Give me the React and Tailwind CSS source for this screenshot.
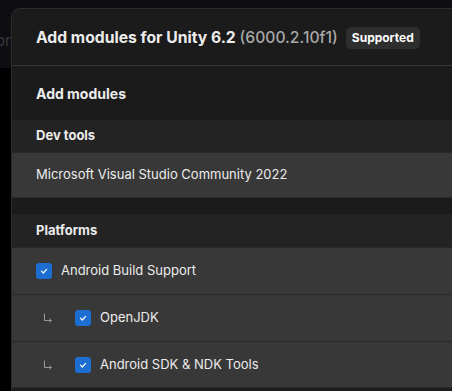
import React from "react";

function Check() {
  return (
    <span className="flex h-4 w-4 shrink-0 items-center justify-center rounded-[3px] bg-[#1c6fd1]">
      <svg width="10" height="10" viewBox="0 0 10 10" fill="none">
        <path d="M2.5 5.2 L4.3 7 L7.6 3.4" stroke="#ffffff" strokeWidth="1.2" strokeLinecap="round" strokeLinejoin="round" />
      </svg>
    </span>
  );
}

function Arrow() {
  return (
    <svg width="12" height="12" viewBox="0 0 12 12" fill="none" className="shrink-0">
      <path d="M2.5 1.5 V8.5 H9.5" stroke="#9a9a9a" strokeWidth="1" />
      <path d="M7.5 6.5 L9.5 8.5 L7.5 10.5" stroke="#9a9a9a" strokeWidth="1" />
    </svg>
  );
}

export default function App() {
  return (
    <div className="relative h-[391px] w-[452px] overflow-hidden bg-black font-['Inter',sans-serif]">
      <div className="flex h-[68px] items-start bg-[#0e0e12] pt-[30px]">
        <span className="-ml-[4px] text-[15px] text-[#3a3a40]">on</span>
      </div>
      <div className="absolute left-[11px] top-[8px] w-[460px] rounded-tl-[9px] border border-[#2c2c2c] bg-[#1b1b1b] text-[#ececec]">
        <div className="flex h-[57px] items-center gap-[8px] border-b border-[#363636] px-6 pt-[2px]">
          <span className="text-[15.7px] font-bold">
            Add modules for Unity 6.2{" "}
            <span className="font-medium text-[#a8a8a8]">(6000.2.10f1)</span>
          </span>
          <span className="rounded-[5px] bg-[#2e2e2e] px-[6px] py-[2px] text-[12px] font-bold text-white">Supported</span>
        </div>
        <div className="flex h-[54px] items-center px-6 text-[14px] font-bold">Add modules</div>
        <div className="flex h-[32px] items-center bg-[#232323] px-6 text-[13px] font-bold">Dev tools</div>
        <div className="flex h-[46px] items-center border-y border-[#2a2a2a] bg-[#383838] px-6 text-[13px]">
          Microsoft Visual Studio Community 2022
        </div>
        <div className="h-[16px]" />
        <div className="flex h-[33px] items-center bg-[#232323] px-6 text-[13px] font-bold">Platforms</div>
        <div className="flex h-[47px] items-center gap-[9px] border-t border-[#2a2a2a] bg-[#383838] px-6 text-[13px]">
          <Check />
          <span>Android Build Support</span>
        </div>
        <div className="flex h-[47px] items-center border-t border-[#2a2a2a] bg-[#383838] pl-[30px] text-[13px]">
          <Arrow />
          <span className="ml-[21px]"><Check /></span>
          <span className="ml-[9px]">OpenJDK</span>
        </div>
        <div className="flex h-[47px] items-center border-y border-[#2a2a2a] bg-[#383838] pl-[30px] text-[13px]">
          <Arrow />
          <span className="ml-[21px]"><Check /></span>
          <span className="ml-[9px]">Android SDK &amp; NDK Tools</span>
        </div>
        <div className="h-[20px] bg-[#1e1e1e]" />
      </div>
    </div>
  );
}
